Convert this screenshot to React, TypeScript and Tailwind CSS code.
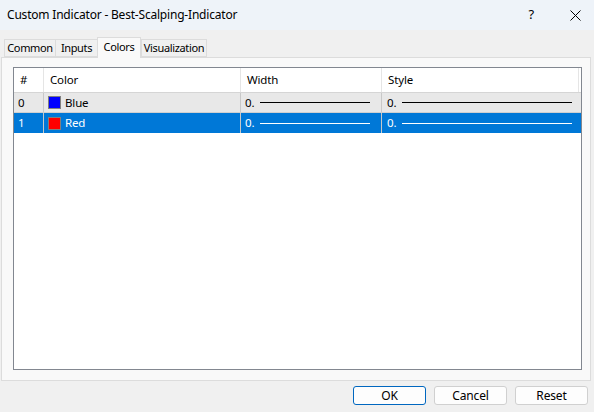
import React from "react";

type Row = { id: number; name: string; swatch: string };

const rows: Row[] = [
  { id: 0, name: "Blue", swatch: "bg-[#0000ff]" },
  { id: 1, name: "Red", swatch: "bg-[#ff0000]" },
];

const tabs = [
  { label: "Common", w: "w-[51px]" },
  { label: "Inputs", w: "w-[42px]" },
  { label: "Colors", w: "w-[44px]" },
  { label: "Visualization", w: "w-[66px]" },
];

const App: React.FC = () => {
  return (
    <div
      className="w-[594px] h-[412px] bg-[#f0f0f0] flex flex-col text-[11.5px] tracking-[-0.15px] text-black overflow-hidden"
      style={{ fontFamily: '"Noto Sans", "Open Sans", sans-serif' }}
    >
      {/* Title bar */}
      <div className="h-[30px] bg-[#eef3f9] flex items-center pl-[7px] shrink-0">
        <span className="text-[12px] tracking-[-0.2px] flex-1">Custom Indicator - Best-Scalping-Indicator</span>
        <span className="text-[13px] mr-[36px]">?</span>
        <span className="flex justify-center mr-[13px]">
          <svg width="11" height="11" viewBox="0 0 11 11">
            <path d="M0.5 0.5 L10.5 10.5 M10.5 0.5 L0.5 10.5" stroke="#000" strokeWidth="1" />
          </svg>
        </span>
      </div>

      {/* Tabs */}
      <div className="flex items-end h-[20px] mt-[7px] pl-[4px] shrink-0 relative z-10 text-[11px] tracking-[-0.35px]">
        {tabs.map((t) =>
          t.label === "Colors" ? (
            <div
              key={t.label}
              className={`${t.w} h-[21px] mb-[-1px] bg-[#f9f9f9] border border-b-0 border-[#dcdcdc] flex justify-center items-start pt-[1px]`}
            >
              {t.label}
            </div>
          ) : (
            <div
              key={t.label}
              className={`${t.w} h-[18px] bg-[#f0f0f0] border border-r-0 last:border-r border-[#dcdcdc] flex items-center justify-center`}
            >
              {t.label}
            </div>
          )
        )}
      </div>

      {/* Panel */}
      <div className="ml-[1px] w-[590px] h-[324px] bg-[#f9f9f9] border border-[#dcdcdc] pt-[9px] pl-[11px] pr-[8px] pb-[10px] shrink-0">
        <div className="h-full border border-[#828790] bg-white">
          <div className="grid grid-cols-[30px_197px_141px_197px] h-[25px] bg-white border-b border-[#d5d5d5]">
            <div className="pl-[6px] flex items-center border-r border-[#e5e5e5]">#</div>
            <div className="pl-[6px] flex items-center border-r border-[#e5e5e5]">Color</div>
            <div className="pl-[6px] flex items-center border-r border-[#e5e5e5]">Width</div>
            <div className="pl-[6px] flex items-center border-r border-[#e5e5e5]">Style</div>
          </div>
          {rows.map((r) => {
            const sel = r.id === 1;
            const rowCls = sel ? "bg-[#0078d7] text-white" : "bg-[#e8e8e8] text-black";
            const line = sel ? "bg-white" : "bg-black";
            return (
              <div
                key={r.id}
                className={`grid grid-cols-[30px_197px_141px_197px] h-[20px] ${rowCls} ${sel ? "" : "border-b border-[#d0d0d0]"}`}
              >
                <div className="pl-[4px] flex items-center border-r border-[#c8c8c8]">{r.id}</div>
                <div className="pl-[4px] flex items-center gap-[4px] border-r border-[#c8c8c8]">
                  <span className={`w-[13px] h-[13px] border border-[#808080] ${r.swatch}`} />
                  <span>{r.name}</span>
                </div>
                <div className="pl-[4px] pr-[11px] flex items-center gap-[6px] border-r border-[#c8c8c8]">
                  <span>0.</span>
                  <span className={`flex-1 h-[1px] ${line}`} />
                </div>
                <div className="pl-[5px] pr-[7px] flex items-center gap-[6px]">
                  <span>0.</span>
                  <span className={`flex-1 h-[1px] ${line}`} />
                </div>
              </div>
            );
          })}
        </div>
      </div>

      {/* Buttons */}
      <div className="flex justify-end gap-[8px] pr-[6px] mt-[5px] text-[12px]">
        <button className="w-[73px] h-[19px] rounded-[3px] border border-[#0067c0] bg-[#fdfdfd] flex items-center justify-center">
          OK
        </button>
        <button className="w-[73px] h-[19px] rounded-[3px] border border-[#d0d0d0] bg-[#fdfdfd] flex items-center justify-center">
          Cancel
        </button>
        <button className="w-[73px] h-[19px] rounded-[3px] border border-[#d0d0d0] bg-[#fdfdfd] flex items-center justify-center">
          Reset
        </button>
      </div>
    </div>
  );
};

export default App;
